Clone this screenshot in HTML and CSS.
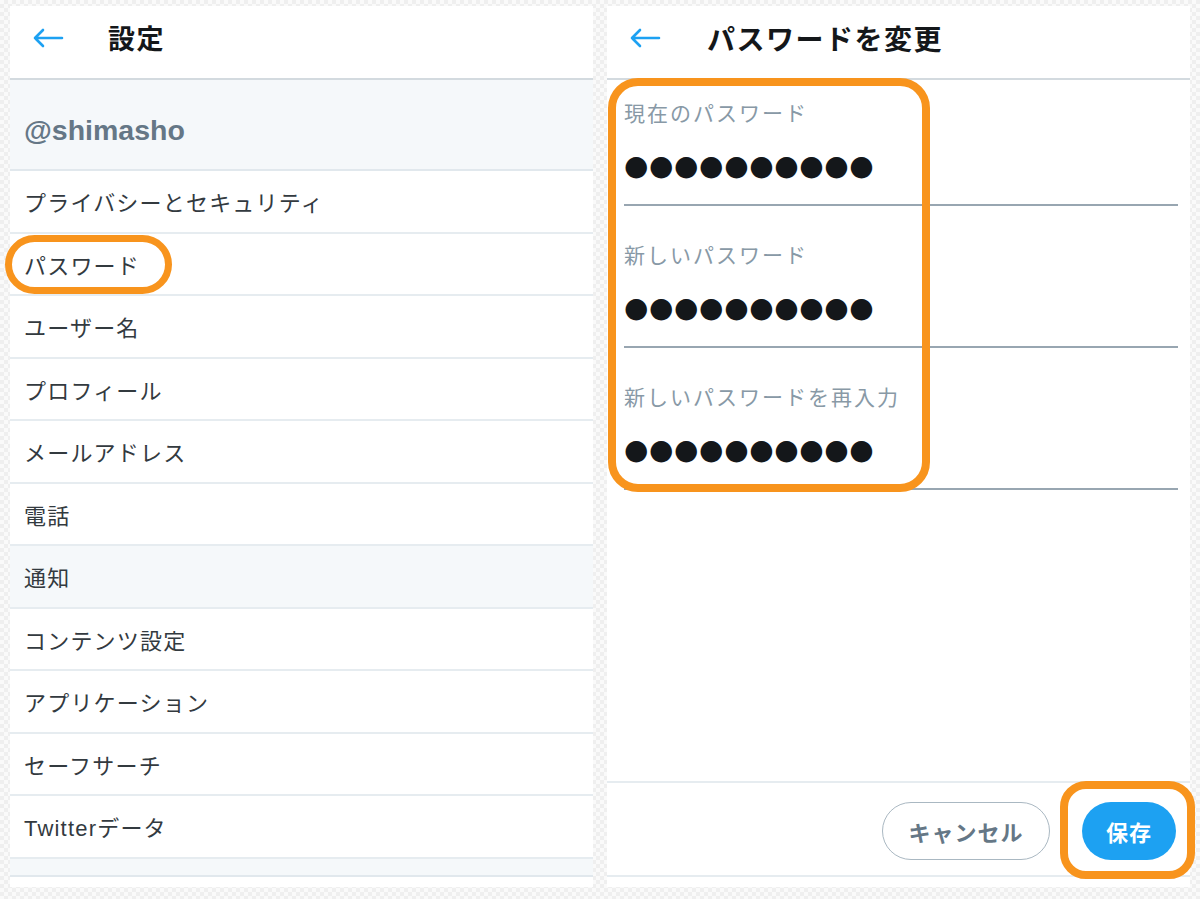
FILE: index.html
```html
<!DOCTYPE html>
<html lang="ja">
<head>
<meta charset="utf-8">
<title>設定 / パスワードを変更</title>
<link rel="stylesheet" href="styles.css">
</head>
<body>
<div class="page">
  <section class="panel">
    <header class="bar">
      <svg class="back" viewBox="0 0 32 20" width="32" height="20" aria-hidden="true">
        <path d="M3 10 H30 M11 2 L3 10 L11 18" fill="none" stroke="#1da1f2" stroke-width="2.6" stroke-linecap="round" stroke-linejoin="round"/>
      </svg>
      <h1 class="title">設定</h1>
    </header>
    <div class="account">@shimasho</div>
    <ul class="menu">
      <li class="item">プライバシーとセキュリティ</li>
      <li class="item item-marked">パスワード</li>
      <li class="item">ユーザー名</li>
      <li class="item">プロフィール</li>
      <li class="item">メールアドレス</li>
      <li class="item">電話</li>
      <li class="item item-group">通知</li>
      <li class="item">コンテンツ設定</li>
      <li class="item">アプリケーション</li>
      <li class="item">セーフサーチ</li>
      <li class="item">Twitterデータ</li>
    </ul>
    <div class="menu-end"></div>
  </section>

  <section class="panel panel-form">
    <header class="bar">
      <svg class="back" viewBox="0 0 32 20" width="32" height="20" aria-hidden="true">
        <path d="M3 10 H30 M11 2 L3 10 L11 18" fill="none" stroke="#1da1f2" stroke-width="2.6" stroke-linecap="round" stroke-linejoin="round"/>
      </svg>
      <h1 class="title">パスワードを変更</h1>
    </header>
    <div class="fields">
      <div class="field">
        <div class="label">現在のパスワード</div>
        <div class="mask">●●●●●●●●●●</div>
      </div>
      <div class="field">
        <div class="label">新しいパスワード</div>
        <div class="mask">●●●●●●●●●●</div>
      </div>
      <div class="field">
        <div class="label">新しいパスワードを再入力</div>
        <div class="mask">●●●●●●●●●●</div>
      </div>
    </div>
    <div class="spacer"></div>
    <footer class="actions">
      <button class="btn btn-cancel">キャンセル</button>
      <button class="btn btn-save">保存</button>
    </footer>
  </section>
</div>
</body>
</html>
```

FILE: styles.css
```css
*, *::before, *::after { box-sizing: border-box; }

html, body {
  margin: 0;
  height: 899px;
}

body {
  font-family: "Liberation Sans", "Noto Sans CJK JP", sans-serif;
  color: #292f33;
  background-color: #fafafa;
  background-image:
    linear-gradient(45deg, #efefef 25%, transparent 25%, transparent 75%, #efefef 75%),
    linear-gradient(45deg, #efefef 25%, transparent 25%, transparent 75%, #efefef 75%);
  background-size: 8px 8px;
  background-position: 0 0, 4px 4px;
}

.page {
  display: flex;
  gap: 14px;
  padding: 6px 10px 12px 10px;
  height: 899px;
}

.panel {
  flex: 1;
  display: flex;
  flex-direction: column;
  background: #fff;
  position: relative;
}

/* top bar */
.bar {
  height: 74px;
  display: flex;
  align-items: flex-start;
  padding: 14px 0 0 22px;
  border-bottom: 2px solid #d3dadf;
  flex: none;
}

.back {
  display: block;
  margin-top: 8px;
}

.title {
  margin: 0 0 0 44px;
  line-height: 36px;
  font-family: "Noto Sans CJK JP", sans-serif;
  font-size: 27px;
  font-weight: 700;
  letter-spacing: 1.5px;
  color: #14171a;
}

.panel-form .title {
  margin-left: 46px;
  font-size: 28px;
}

/* settings list */
.account {
  height: 91px;
  background: #f5f8fa;
  border-bottom: 2px solid #e1e8ed;
  display: flex;
  align-items: center;
  padding: 12px 0 0 14px;
  font-size: 28.5px;
  font-weight: 700;
  color: #657786;
}

.menu {
  list-style: none;
  margin: 0;
  padding: 0;
}

.item {
  height: 62.5px;
  border-bottom: 2px solid #e6ecf0;
  display: flex;
  align-items: center;
  padding-left: 14px;
  font-family: "Liberation Sans", "Noto Sans CJK JP", sans-serif;
  font-size: 22px;
  letter-spacing: 1.2px;
  color: #333a3f;
  position: relative;
}

.item-group {
  background: #f5f8fa;
}

.item-marked::after {
  content: "";
  position: absolute;
  left: -5px;
  top: 1px;
  width: 167px;
  height: 59px;
  border: 7px solid #f8941d;
  border-radius: 30px;
}

.menu-end {
  height: 18px;
  background: #f5f8fa;
  border-bottom: 2px solid #e1e8ed;
}

/* password form */
.fields {
  position: relative;
  margin: 0 12px 0 17px;
}

.fields::after {
  content: "";
  position: absolute;
  left: -16px;
  top: -2px;
  width: 322px;
  height: 414px;
  border: 8px solid #f8941d;
  border-radius: 30px;
}

.field {
  padding: 34px 0 18px;
  border-bottom: 2px solid #98a6b1;
}

.field:first-child {
  padding-top: 18px;
}

.label {
  height: 28px;
  line-height: 28px;
  font-family: "Noto Sans CJK JP", sans-serif;
  font-size: 21px;
  letter-spacing: 2px;
  color: #8899a6;
}

.mask {
  margin-top: 20px;
  height: 40px;
  line-height: 40px;
  font-family: "DejaVu Sans", sans-serif;
  font-size: 28px;
  letter-spacing: 0.6px;
  color: #14171a;
}

.spacer {
  flex: 1;
}

.actions {
  flex: none;
  display: flex;
  justify-content: flex-end;
  align-items: center;
  gap: 32px;
  padding: 19px 14px 15px;
  border-top: 2px solid #e6ecf0;
  border-bottom: 2px solid #e6ecf0;
  margin-bottom: 10px;
}

.btn {
  height: 58px;
  border-radius: 29px;
  font-family: "Noto Sans CJK JP", sans-serif;
  font-size: 22px;
  font-weight: 700;
  letter-spacing: 1px;
  cursor: pointer;
}

.btn-cancel {
  width: 168px;
  background: #fff;
  border: 1.5px solid #aab8c2;
  color: #657786;
}

.btn-save {
  width: 94px;
  background: #1da1f2;
  border: none;
  color: #fff;
  position: relative;
}

.btn-save::after {
  content: "";
  position: absolute;
  left: -22px;
  top: -21px;
  right: -19px;
  bottom: -19px;
  border: 8px solid #f8941d;
  border-radius: 26px;
}
```
